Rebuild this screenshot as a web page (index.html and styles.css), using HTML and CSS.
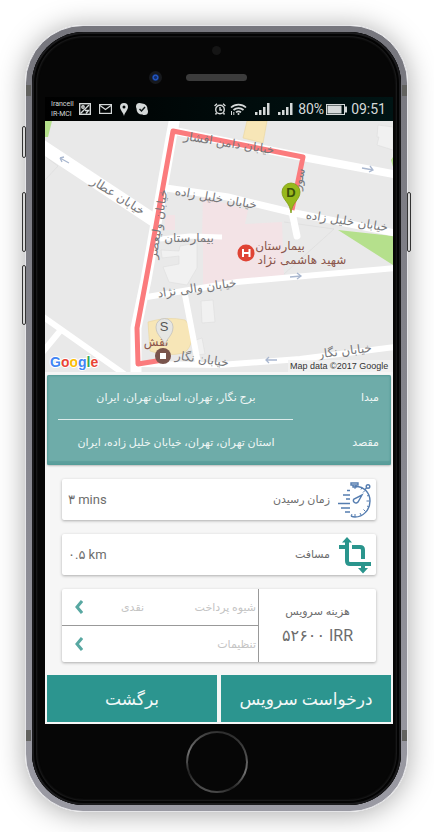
FILE: index.html
```html
<!DOCTYPE html>
<html lang="fa" dir="rtl">
<head>
<meta charset="utf-8">
<meta name="viewport" content="width=device-width, initial-scale=1">
<title>درخواست سرویس</title>
<link rel="stylesheet" href="styles.css">
</head>
<body>
<div class="phone">
  <span class="key key-mute"></span>
  <span class="key key-up"></span>
  <span class="key key-down"></span>
  <span class="key key-power"></span>
  <span class="band band-top"></span>
  <span class="band band-bottom"></span>
  <div class="bezel">
    <div class="brow">
      <span class="sensor"></span>
      <div class="earpiece"><span class="camera"></span><span class="speaker"></span></div>
    </div>

    <main class="screen">
      <header class="status" dir="ltr">
        <div class="carriers"><span>Irancell</span><span>IR-MCI</span></div>
        <svg class="i12" viewBox="0 0 12 12" fill="none" stroke="#d5d9d9" stroke-width="1.4"><rect x=".7" y=".7" width="10.6" height="10.6"/><circle cx="4" cy="4" r="1.2"/><path d="M1.500 10.500 10 2M6 7.500h3.500l-2.500 3"/></svg>
        <svg class="mail" viewBox="0 0 13 10" fill="none" stroke="#d5d9d9" stroke-width="1.2"><rect x=".6" y=".6" width="11.8" height="8.8"/><path d="m1 1.500 5.500 4 5.500-4"/></svg>
        <svg class="pin" viewBox="0 0 8 13" fill="#d5d9d9" fill-rule="evenodd"><path d="M4 0a4 4 0 0 0-4 4c0 3 3 5 4 9 1-4 4-6 4-9a4 4 0 0 0-4-4Zm0 2.500a1.500 1.500 0 1 1 0 3 1.500 1.500 0 0 1 0-3Z"/></svg>
        <svg class="i12" viewBox="0 0 12 12"><path fill="#d5d9d9" d="M3.500 0Q5 0 6 .6 11.500 1 11.500 6.500 12 7.500 12 8.500A3.500 3.500 0 0 1 8.500 12Q7 12 6.500 11.500.5 11.500.5 5.500 0 4.500 0 3.500A3.500 3.500 0 0 1 3.500 0Z"/><path d="m3.500 6 2 2 3.500-4" fill="none" stroke="#101818" stroke-width="1.500"/></svg>
        <span class="spacer"></span>
        <svg class="i12" viewBox="0 0 12 12" fill="none" stroke="#d5d9d9" stroke-width="1.400"><circle cx="6" cy="6.500" r="4.300"/><path d="M6 4v3h2M.6 3 3 .8M11.400 3 9 .8M2.500 10 1.500 11.500M9.500 10l1 1.500"/></svg>
        <svg class="wifi" viewBox="0 0 17 12" fill="none" stroke="#d5d9d9" stroke-width="1.700"><path d="M1 4.500a11 11 0 0 1 15 0M3.500 7a7.500 7.500 0 0 1 10 0M6 9.300a4 4 0 0 1 5 0"/><circle cx="8.500" cy="11" r="1" fill="#d5d9d9" stroke="none"/><path d="M1.500 8v4M3.800 9v3" stroke-width="1"/></svg>
        <svg class="bars" viewBox="0 0 15 12" fill="#d5d9d9"><path d="M0 9h2.500v3H0zM4 7h2.500v5H4zM8 4h2.500v8H8zM12 0h2.500v12H12z"/></svg>
        <svg class="bars" viewBox="0 0 15 12" fill="#d5d9d9"><path d="M0 9h2.500v3H0zM4 7h2.500v5H4zM8 4h2.500v8H8zM12 0h2.500v12H12z"/></svg>
        <span class="charge">80%</span>
        <svg class="battery" viewBox="0 0 21 11"><rect x=".5" y=".5" width="18" height="10" fill="none" stroke="#d5d9d9"/><path fill="#d5d9d9" d="M1.500 1.500h14v8h-14zM19 2.500h2v6h-2z"/></svg>
        <time>09:51</time>
      </header>

      <svg class="map" viewBox="45 121 348 251" role="img" aria-label="نقشه مسیر">
        <path fill="#e9e9e9" d="M45 121h348v251H45z"/>
        <path fill="#b5e08c" d="M45 121h7l-4 16h-3zM338 230l55 6v29zM391 160l2-3v10z"/>
        <path fill="#f3e3e6" d="m203 197 45 13-3 14 37-2 2 54-81 9v-40l-1-9zM165 215h10v15h-10z"/>
        <path fill="#f7e6b7" stroke="#ead59d" stroke-width=".6" d="M247 121h20l-4 22-20-5zM148 322q20-6 37-2 6 6 7 18-1 10-8 15-18 4-34-2z"/>
        <path fill="#f1f1f1" stroke="#ddd" stroke-width=".6" d="m161 250 18 1 1-5 17-3v25l-10 17-18-3-6-15 16-3v-8l-17 2zM201 301l12-1 2 22-13 1zM378 125l15 2v23l-16-5 2-8h-2zM196 340l6-2 3 16-8 1z"/>
        <path fill="none" stroke="#dcdcdc" stroke-width=".7" d="M45 180l13-14-12-9M284 222l50 7-50 45"/>
        <g fill="none" stroke="#fff">
          <path stroke-width="13" d="m40 145 115 76"/>
          <path stroke-width="11" d="m175 117-4 21-16 91-9 51-10 48v50"/>
          <path stroke-width="8" d="m170 130 133 27 95 18"/>
          <path stroke-width="7" d="m166 188 62 9 62 15 105 21"/>
          <path stroke-width="5" d="m160 239 30-3 32 1"/>
          <path stroke-width="7" stroke-linecap="round" d="m292 212 5 24"/>
          <path stroke-width="6" d="m147 297 90-15 158-14M138 364l82 1 80-6 95-12M185 295l13 68"/>
          <path stroke-width="6" d="m42 316 85 60M60 331l-18 22"/>
        </g>
        <path fill="none" stroke="#fb7b7d" stroke-width="5" stroke-linejoin="round" d="m292 210 11-53-130-26-18 100-9 49-9 48 1 36 25-4"/>
        <g fill="none" stroke="#a9b7cf" stroke-width="1.300"><path d="m60 158 9 5M60 158l4-1M60 158l2 4M362 168l11 2M370 166l3 4-4 2M290 277l11-1M297 273l4 3-4 3M266 360h11M269 357l-3 3 3 3"/></g>
        <g class="streets" text-anchor="middle">
          <text transform="translate(118 196) rotate(32)" y="4">خیابان عطار</text>
          <text transform="translate(229 143) rotate(9)" y="4">خیابان دامن افشار</text>
          <text transform="translate(158 224) rotate(-81)" y="4">خیابان ولیعصر</text>
          <text transform="translate(216 198) rotate(10)" y="4">خیابان خلیل زاده</text>
          <text transform="translate(347 221) rotate(9)" y="4">خیابان خلیل زاده</text>
          <text transform="translate(299 179) rotate(-78)" y="4">سور</text>
          <text x="189" y="242">بیمارستان</text>
          <text transform="translate(197 288) rotate(-8)" y="4">خیابان والی نژاد</text>
          <text transform="translate(202 359) rotate(8)" y="4">خیابان نگار</text>
          <text transform="translate(345 351) rotate(-7)" y="4">خیابان نگار</text>
        </g>
        <g class="places" text-anchor="middle">
          <text x="280" y="250">بیمارستان</text>
          <text x="302" y="264">شهید هاشمی نژاد</text>
          <text x="156" y="346">نقش</text>
        </g>
        <circle cx="246" cy="253" r="8.500" fill="#df4334"/>
        <path d="M243 249v8M249.500 249v8M243 253h6" stroke="#fff" stroke-width="2"/>
        <circle cx="163" cy="356" r="8" fill="#79544c"/><path fill="#fff" d="M160 353h6v6h-6z"/>
        <path d="M165 346c-1-8-9-10-9-19a8.500 8.500 0 0 1 17 0c0 9-7 11-8 19Z" fill="#e6e6e3" stroke="#bbb" stroke-width=".7"/>
        <path d="M291 213c-1-11-9-13-9-21a9 9 0 0 1 18 0c0 8-8 10-9 21Z" fill="#97b91c" stroke="#7d9c13" stroke-width=".8"/>
        <g class="markers" text-anchor="middle"><text class="start" x="164" y="331">S</text><text x="291" y="197">D</text></g>
        <g class="google"><text x="50" y="367" direction="ltr"><tspan fill="#4285f4">G</tspan><tspan fill="#ea4335">o</tspan><tspan fill="#fbbc05">o</tspan><tspan fill="#4285f4">g</tspan><tspan fill="#34a853">l</tspan><tspan fill="#ea4335">e</tspan></text></g>
        <path fill="#f3f3f3" fill-opacity=".8" d="M288 360h105v12H288z"/>
        <text class="credit" x="290" y="369" direction="ltr">Map data ©2017 Google</text>
      </svg>

      <dl class="route">
        <div class="leg"><dt>مبدا</dt><dd>برج نگار، تهران، استان تهران، ایران</dd></div>
        <div class="leg"><dt>مقصد</dt><dd>استان تهران، تهران، خیابان خلیل زاده، ایران</dd></div>
      </dl>

      <div class="cards">
        <section class="card fact">
          <svg viewBox="0 0 34 38" fill="none" stroke="#557db0" stroke-width="1.400"><path d="M17 5.500C26 5 32 12 32 20c0 9-7 16-15 16q-2 0-4-1"/><path d="M17 5v3M31.500 20h-3M17 36v-3M27 9.500l-2 2M27.500 30.500l-2-2M24 6.500l-1 2M31 14l-2 1M31 26l-2-1M23 34l-1-2M13 35l1-2" stroke-width="1"/><path d="M13 2h7v2h-7zM15 4v2h3V4"/><circle cx="30" cy="5.500" r="1.800"/><path d="m28.500 7-2 2M24 14l-4 7a2.500 2.500 0 0 1-4-3l8-4ZM9 9.500h3M5 14h7M8 18h4M0 22.500h12M3 27h9M5 31h0M7 31h5" /></svg>
          <span>زمان رسیدن</span><b dir="ltr">۳ mins</b>
        </section>
        <section class="card fact">
          <svg viewBox="0 0 34 38" fill="none" stroke="#2a958d" stroke-width="4"><path d="M1 11h8M9 5v20q0 3 3 3h21M14 11h8q3 0 3 3v9M25 28v5"/><path fill="#2a958d" stroke="none" d="M4 6.500 9 1l5 5.500zM20 32h10l-5 5.500z"/></svg>
          <span>مسافت</span><b dir="ltr">۰.۵ km</b>
        </section>
        <section class="card fare">
          <div class="price"><span>هزینه سرویس</span><strong dir="ltr">۵۲۶۰۰ IRR</strong></div>
          <div class="options">
            <button type="button" class="option"><span>شیوه پرداخت</span><span>نقدی</span><svg viewBox="0 0 8 14"><path d="M7 1 2 7l5 6"/></svg></button>
            <button type="button" class="option"><span>تنظیمات</span><svg viewBox="0 0 8 14"><path d="M7 1 2 7l5 6"/></svg></button>
          </div>
        </section>
      </div>

      <div class="actions">
        <button type="button">درخواست سرویس</button>
        <button type="button">برگشت</button>
      </div>
    </main>

    <div class="chin"><span class="home"></span></div>
  </div>
</div>
</body>
</html>
```
FILE: styles.css
```css
* { box-sizing: border-box; }
body {
  margin: 0;
  padding: 25px 26px 20px 25px;
  background: #fff;
  font-family: Roboto, "DejaVu Sans", sans-serif;
  color: #6d6d6d;
}
button { border: 0; margin: 0; font: inherit; cursor: pointer; }
svg { display: block; flex: none; }

.phone {
  position: relative;
  padding: 6px;
  border: 1px solid #e5e5e8;
  border-radius: 58px;
  background: linear-gradient(#77777e, #85858d 50%, #9a9aa3);
  box-shadow: 0 2px 28px rgba(0, 0, 0, .34);
}
.bezel {
  padding: 0 8px 0 13px;
  border-radius: 52px;
  background: #060606;
  box-shadow: inset 0 0 0 2px #1b1b1d, inset 0 0 0 4px #030303, inset 0 0 2px 5px #202021;
}
.key { position: absolute; left: -4px; width: 4px; border: 1px solid #333; border-radius: 2px; background: #d8d8d8; }
.key-mute { top: 100px; height: 32px; }
.key-up { top: 166px; height: 60px; }
.key-down { top: 239px; height: 60px; }
.key-power { top: 166px; left: auto; right: -4px; height: 60px; }
.band { position: absolute; left: 0; right: 0; height: 11px; border: solid #62625f; border-width: 0 5px; }
.band-top { top: 59px; }
.band-bottom { bottom: 70px; }

.brow { display: flex; flex-direction: column; align-items: center; gap: 16px; height: 65px; padding: 14px 5px 0 0; }
.sensor { width: 9px; height: 9px; border-radius: 50%; background: #151515; }
.earpiece { position: relative; display: flex; height: 13px; align-items: center; }
.speaker { width: 61px; height: 7px; border-radius: 4px; background: #3b3b3b; }
.camera { position: absolute; right: 85px; width: 13px; height: 13px; border-radius: 50%; border: 3px solid #17191d; background: radial-gradient(#122b66 20%, #2558c4 45%, #081a3d 80%); }

.screen { position: relative; background: #f6f6f6; }
.status { display: flex; align-items: center; height: 24px; padding: 0 7px 0 6px; gap: 8px; background: linear-gradient(90deg, #000, #001414); color: #d5d9d9; font-size: 14px; }
.carriers { display: flex; flex-direction: column; width: 25px; font-size: 7px; line-height: 10px; margin-right: -5px; }
.spacer { flex: 1; }
.i12 { width: 12px; height: 12px; }
.mail { width: 13px; height: 10px; }
.pin { width: 8px; height: 13px; }
.wifi { width: 17px; height: 12px; margin-left: -4px; }
.bars { width: 15px; height: 12px; }
.charge { margin-left: -3px; }
.battery { width: 21px; height: 11px; margin: 0 -4px 0 -6px; }

.map { width: 100%; height: auto; }
.streets { font: 12px "DejaVu Sans", sans-serif; fill: #77777a; }
.places { font: 12px "DejaVu Sans", sans-serif; fill: #8b574c; }
.markers { font: bold 13px "Liberation Sans", sans-serif; fill: #3c5208; }
.markers .start { font-weight: normal; fill: #555; }
.google { font: bold 14px "Liberation Sans", sans-serif; stroke: #fff; stroke-width: 2px; paint-order: stroke; }
.credit { font: 9px "Liberation Sans", sans-serif; fill: #333; }

.route { margin: 3px 2px 0; padding: 0 12px; border-radius: 2px; background: #6eaca9; color: #eef6f5; box-shadow: inset 0 0 2px 1px #559c99, inset 0 -4px 1px #5d9f9c, 0 1px 2px #bbb; font-size: 11px; }
.leg { position: relative; display: flex; align-items: center; height: 45px; }
.leg:first-child::after { content: ""; position: absolute; left: -1px; right: 86px; bottom: 0; height: 1px; background: #dcebea; }
.leg dt { width: 86px; }
.leg dd { flex: 1; margin: 0; text-align: center; }

.cards { display: flex; flex-direction: column; gap: 14px; padding: 14px 17px 13px; }
.card { background: #fff; border-radius: 2px; box-shadow: 0 1px 3px rgba(0, 0, 0, .3); }
.fact { display: flex; align-items: center; gap: 8px; height: 41px; padding: 0 4px 0 6px; font-size: 11px; }
.fact svg { width: 34px; height: 38px; }
.fact b { margin-right: auto; font-size: 13px; font-weight: 400; }
.fare { display: flex; height: 73px; }
.price { display: flex; flex-direction: column; align-items: center; justify-content: center; gap: 8px; width: 118px; border-left: 1px solid #999; font-size: 11px; }
.price strong { font-size: 16px; line-height: 20px; font-weight: 400; }
.options { display: flex; flex: 1; flex-direction: column; }
.option { display: flex; align-items: center; flex: 1; padding: 0 2px 0 13px; background: none; color: #c4c4c4; font-size: 11px; }
.option + .option { border-top: 1px solid #999; }
.option span + span { margin-right: auto; }
.option svg { width: 8px; height: 14px; margin-right: auto; fill: none; stroke: #58a8a2; stroke-width: 3; }
.option span + span + svg { margin-right: 38px; }

.actions { display: flex; gap: 4px; padding: 0 2px 2px; }
.actions button { flex: 1; height: 47px; background: #2c958f; color: #f1f8f7; font-size: 17px; }

.chin { display: flex; justify-content: center; height: 81px; padding: 7px 5px 0 0; }
.home { width: 62px; height: 62px; border: 2px solid transparent; border-radius: 50%; background: linear-gradient(#060606, #060606) padding-box, linear-gradient(200deg, #181818, #727272 50%, #222 75%, #777) border-box; }
```
